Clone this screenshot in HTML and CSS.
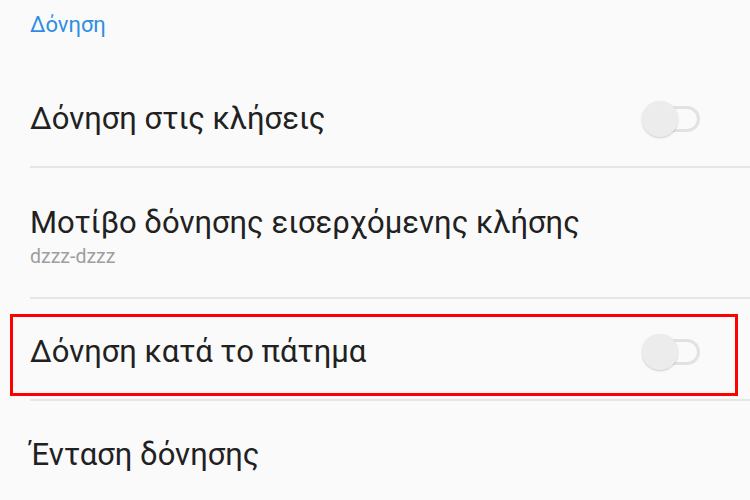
FILE: index.html
```html
<!DOCTYPE html>
<html lang="el">
<head>
    <meta charset="UTF-8">
    <meta name="viewport" content="width=device-width, initial-scale=1.0">
    <title>Δόνηση</title>
    <link rel="stylesheet" href="styles.css">
</head>
<body>
    <div class="settings">
        <div class="section-title">Δόνηση</div>

        <div class="row row-single">
            <div class="row-text">
                <div class="row-title">Δόνηση στις κλήσεις</div>
            </div>
            <div class="switch">
                <div class="switch-track"></div>
                <div class="switch-thumb"></div>
            </div>
        </div>

        <div class="row row-double">
            <div class="row-text">
                <div class="row-title">Μοτίβο δόνησης εισερχόμενης κλήσης</div>
                <div class="row-summary">dzzz-dzzz</div>
            </div>
        </div>

        <!-- Σημειωμένη γραμμή -->
        <div class="row row-single row-marked">
            <div class="row-text">
                <div class="row-title">Δόνηση κατά το πάτημα</div>
            </div>
            <div class="switch">
                <div class="switch-track"></div>
                <div class="switch-thumb"></div>
            </div>
        </div>

        <div class="row row-last">
            <div class="row-text">
                <div class="row-title">Ένταση δόνησης</div>
            </div>
        </div>
    </div>
</body>
</html>
```

FILE: styles.css
```css
* {
    margin: 0;
    padding: 0;
    box-sizing: border-box;
}

body {
    font-family: Roboto, 'Noto Sans', sans-serif;
    background: #fafafa;
    color: #212121;
    overflow: hidden;
}

.settings {
    display: flex;
    flex-direction: column;
}

.section-title {
    height: 66px;
    padding: 12px 0 0 30px;
    font-size: 22px;
    line-height: 26px;
    color: #2f8de4;
}

.row {
    display: flex;
    align-items: center;
    margin-left: 30px;
    padding-right: 50px;
    border-bottom: 2px solid #e6e6e6;
}

.row-single {
    height: 102px;
    padding-top: 6px;
}

.row-double {
    height: 131px;
    padding-top: 8px;
}

.row-last {
    height: 104px;
    border-bottom: none;
    padding-top: 3px;
}

.row-text {
    flex: 1;
}

.row-title {
    font-size: 31px;
    line-height: 36px;
}

.row-summary {
    font-size: 19.5px;
    line-height: 24px;
    color: #9e9e9e;
    margin-top: 4px;
}

.row-marked {
    position: relative;
}

.row-marked::after {
    content: '';
    position: absolute;
    left: -20px;
    right: 12px;
    top: 15px;
    bottom: 3px;
    border: 3px solid #ff0000;
}

.switch {
    position: relative;
    width: 58px;
    height: 36px;
}

.switch-track {
    position: absolute;
    right: 0;
    top: 5px;
    width: 50px;
    height: 26px;
    border: 3px solid #e2e2e2;
    border-radius: 13px;
    background: #fafafa;
}

.switch-thumb {
    position: absolute;
    left: 0;
    top: 0;
    width: 36px;
    height: 36px;
    border-radius: 50%;
    background: #ececec;
    box-shadow: 0 1px 2px rgba(0, 0, 0, 0.18);
}
```
